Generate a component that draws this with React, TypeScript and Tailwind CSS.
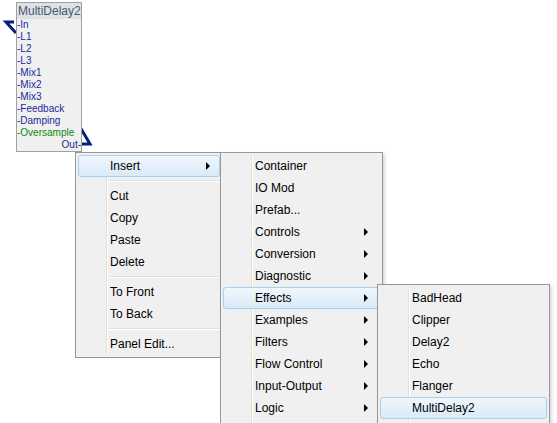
import React from "react";

type Item = { label: string; sub?: boolean; active?: boolean } | "sep";

const font = { fontFamily: '"Liberation Sans", Arial, sans-serif' };

const mainItems: Item[] = [
  { label: "Insert", sub: true, active: true },
  "sep",
  { label: "Cut" },
  { label: "Copy" },
  { label: "Paste" },
  { label: "Delete" },
  "sep",
  { label: "To Front" },
  { label: "To Back" },
  "sep",
  { label: "Panel Edit..." },
];

const insertItems: Item[] = [
  { label: "Container" },
  { label: "IO Mod" },
  { label: "Prefab..." },
  { label: "Controls", sub: true },
  { label: "Conversion", sub: true },
  { label: "Diagnostic", sub: true },
  { label: "Effects", sub: true, active: true },
  { label: "Examples", sub: true },
  { label: "Filters", sub: true },
  { label: "Flow Control", sub: true },
  { label: "Input-Output", sub: true },
  { label: "Logic", sub: true },
];

const effectItems: Item[] = [
  { label: "BadHead" },
  { label: "Clipper" },
  { label: "Delay2" },
  { label: "Echo" },
  { label: "Flanger" },
  { label: "MultiDelay2", active: true },
];

const ports = ["-In", "-L1", "-L2", "-L3", "-Mix1", "-Mix2", "-Mix3", "-Feedback", "-Damping"];

function MenuList({ items, arrowRight, tail }: { items: Item[]; arrowRight: string; tail?: boolean }) {
  return (
    <div className="relative flex flex-col">
      {/* gutter line */}
      <div className="absolute left-[28px] top-0 bottom-0 w-[2px] border-l border-[#e0e0e0] bg-white" />
      {items.map((it, i) =>
        it === "sep" ? (
          <div key={i} className="h-[8px] flex flex-col justify-center pl-[30px]">
            <div className="h-[1px] bg-[#e0e0e0]" />
            <div className="h-[1px] bg-white" />
          </div>
        ) : (
          <div
            key={i}
            className={`relative h-[22px] flex items-center pl-[31px] text-[12px] text-black ${
              it.active
                ? "rounded-[3px] border border-[#a8d0ec] bg-gradient-to-b from-[#f0f7fd] to-[#d9eaf7]"
                : "border border-transparent"
            }`}
          >
            <span className="relative">{it.label}</span>
            {it.sub && (
              <span
                className={`absolute top-[6px] w-0 h-0 border-y-[4px] border-y-transparent border-l-[4px] border-l-black ${arrowRight}`}
              />
            )}
          </div>
        )
      )}
      {tail && <div className="h-[22px]" />}
    </div>
  );
}

export default function App() {
  return (
    <div className="relative w-[557px] h-[423px] overflow-hidden bg-white" style={font}>
      {/* wires */}
      <svg className="absolute left-0 top-0" width="100" height="160">
        <polyline points="14,22 6,22 16,33" fill="none" stroke="#0b1f7a" strokeWidth="3" />
        <polyline points="80,127 90,144 80,144" fill="none" stroke="#0b1f7a" strokeWidth="3" />
      </svg>

      {/* module */}
      <div className="absolute left-[16px] top-[2px] w-[66px] border border-[#a0a0a0] bg-[#f0f0f0]">
        <div className="h-[16px] bg-[#dde2e6] text-[12px] leading-[16px] text-[#4a5868] pl-[1px]">MultiDelay2</div>
        <div className="flex flex-col text-[10px] leading-[12px] text-[#1a2a9a]">
          {ports.map((p) => (
            <div key={p}>{p}</div>
          ))}
          <div className="text-[#0a8a0a]">-Oversample</div>
          <div className="text-right">Out-</div>
        </div>
      </div>

      {/* main context menu */}
      <div className="absolute left-[75px] top-[152px] w-[148px] border border-[#979797] bg-[#f0f0f0] p-[2px]">
        <MenuList items={mainItems} arrowRight="right-[9px]" />
      </div>

      {/* insert submenu */}
      <div className="absolute left-[220px] top-[152px] w-[163px] border border-[#979797] bg-[#f0f0f0] p-[2px] shadow-[2px_2px_3px_rgba(0,0,0,0.15)]">
        <MenuList items={insertItems} arrowRight="right-[11px]" tail />
      </div>

      {/* effects submenu */}
      <div className="absolute left-[377px] top-[284px] w-[173px] border border-[#979797] bg-[#f0f0f0] p-[2px] shadow-[2px_2px_3px_rgba(0,0,0,0.15)]">
        <MenuList items={effectItems} arrowRight="right-[11px]" tail />
      </div>
    </div>
  );
}
